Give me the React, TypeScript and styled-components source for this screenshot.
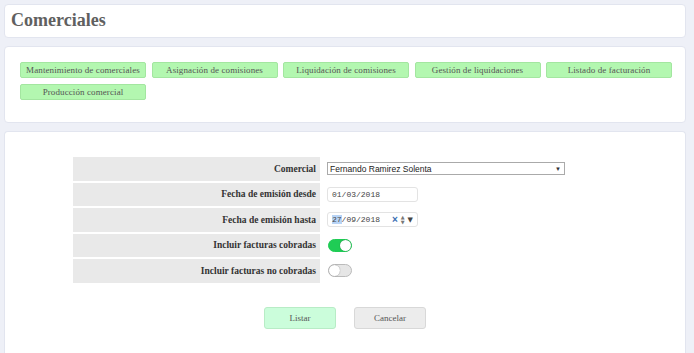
import { FC } from "react";
import styled, { createGlobalStyle } from "styled-components";

const GlobalStyle = createGlobalStyle`
  html, body {
    margin: 0;
    padding: 0;
    background: #eef0f7;
    font-family: "Liberation Serif", "Times New Roman", serif;
    overflow: hidden;
  }
`;

const menuItems = [
  "Mantenimiento de comerciales",
  "Asignación de comisiones",
  "Liquidación de comisiones",
  "Gestión de liquidaciones",
  "Listado de facturación",
  "Producción comercial",
];

const Styles = {
  Page: styled.div`
    display: flex;
    flex-direction: column;
    gap: 8px;
    padding: 4px 8px 0 4px;
    height: 353px;
    box-sizing: border-box;
  `,
  Panel: styled.div<{ $pad: string; $open?: boolean }>`
    background: #ffffff;
    border: 1px solid #e2e5ef;
    border-radius: ${({ $open }) => ($open ? "4px 4px 0 0" : "4px")};
    border-bottom: ${({ $open }) => ($open ? "none" : "1px solid #e2e5ef")};
    padding: ${({ $pad }) => $pad};
    flex: ${({ $open }) => ($open ? "1" : "none")};
  `,
  Title: styled.h1`
    margin: 0;
    font-size: 18px;
    font-weight: bold;
    color: #606060;
    line-height: 20px;
  `,
  Menu: styled.div`
    display: grid;
    grid-template-columns: repeat(5, 126px);
    column-gap: 5.5px;
    row-gap: 6px;
  `,
  MenuButton: styled.button`
    height: 16px;
    padding: 0;
    background: #b3f7b0;
    border: 1px solid #a3e6a0;
    border-radius: 2px;
    font-family: "Liberation Serif", "Times New Roman", serif;
    font-size: 9px;
    letter-spacing: 0.1px;
    color: #555;
    cursor: pointer;
  `,
  Form: styled.div`
    display: grid;
    grid-template-columns: 247px 247px;
    row-gap: 2px;
    margin-left: 68px;
  `,
  Label: styled.div`
    background: #e9e9e9;
    height: 23.5px;
    display: flex;
    align-items: center;
    justify-content: flex-end;
    padding-right: 4px;
    font-size: 9.5px;
    font-weight: bold;
    color: #333;
  `,
  Value: styled.div`
    display: flex;
    align-items: center;
    padding-left: 7px;
  `,
  Select: styled.div`
    width: 238px;
    height: 13px;
    box-sizing: border-box;
    border: 1px solid #aaa;
    display: flex;
    align-items: center;
    justify-content: space-between;
    padding: 0 3px 0 2px;
    font-family: "Liberation Sans", Arial, sans-serif;
    font-size: 8.5px;
    color: #222;
  `,
  Arrow: styled.span`
    font-size: 6px;
    color: #333;
  `,
  DateBox: styled.div`
    width: 91px;
    height: 15px;
    box-sizing: border-box;
    border: 1px solid #e3e3e3;
    border-radius: 3px;
    display: flex;
    align-items: center;
    padding-left: 4px;
    gap: 3px;
    font-family: "Liberation Mono", "Courier New", monospace;
    font-size: 8px;
    color: #666;
  `,
  DateText: styled.span`
    flex: 1;
    color: #444;
  `,
  Highlight: styled.span`
    background: #b8d4f6;
  `,
  Clear: styled.span`
    color: #3a6fb3;
    font-family: "Liberation Sans", Arial, sans-serif;
    font-size: 10px;
    font-weight: bold;
  `,
  Spin: styled.span`
    display: flex;
    flex-direction: column;
    font-family: "DejaVu Sans", sans-serif;
    font-size: 5px;
    line-height: 5px;
    color: #777;
  `,
  Drop: styled.span`
    font-family: "DejaVu Sans", sans-serif;
    font-size: 7px;
    color: #444;
    padding-right: 4px;
  `,
  Toggle: styled.div<{ $on: boolean }>`
    width: 24px;
    height: 13px;
    box-sizing: border-box;
    border-radius: 7px;
    margin-left: 1px;
    background: ${({ $on }) => ($on ? "#1fcc55" : "#e6e6e6")};
    border: 1px solid ${({ $on }) => ($on ? "#1fcc55" : "#bbb")};
    display: flex;
    justify-content: ${({ $on }) => ($on ? "flex-end" : "flex-start")};
    align-items: center;
  `,
  Knob: styled.div`
    width: 11px;
    height: 11px;
    border-radius: 50%;
    background: #fff;
    box-shadow: 0 0 1px rgba(0, 0, 0, 0.5);
  `,
  Actions: styled.div`
    display: flex;
    justify-content: center;
    gap: 18px;
    margin-top: 24px;
  `,
  ActionButton: styled.button<{ $primary?: boolean }>`
    width: 72px;
    height: 22px;
    border-radius: 3px;
    background: ${({ $primary }) => ($primary ? "#cbfddb" : "#ececec")};
    border: 1px solid ${({ $primary }) => ($primary ? "#b8ecc6" : "#d8d8d8")};
    font-family: "Liberation Serif", "Times New Roman", serif;
    font-size: 9px;
    color: #555;
    cursor: pointer;
  `,
};

const App: FC = () => {
  return (
    <>
      <GlobalStyle />
      <Styles.Page>
        <Styles.Panel $pad="5px 6px 7px 6px">
          <Styles.Title>Comerciales</Styles.Title>
        </Styles.Panel>
        <Styles.Panel $pad="15px 15px 22px 15px">
          <Styles.Menu>
            {menuItems.map((item) => (
              <Styles.MenuButton key={item}>{item}</Styles.MenuButton>
            ))}
          </Styles.Menu>
        </Styles.Panel>
        <Styles.Panel $pad="25px 0 0 0" $open>
          <Styles.Form>
            <Styles.Label>Comercial</Styles.Label>
            <Styles.Value>
              <Styles.Select>
                <span>Fernando Ramirez Solenta</span>
                <Styles.Arrow>▼</Styles.Arrow>
              </Styles.Select>
            </Styles.Value>
            <Styles.Label>Fecha de emisión desde</Styles.Label>
            <Styles.Value>
              <Styles.DateBox>
                <Styles.DateText>01/03/2018</Styles.DateText>
              </Styles.DateBox>
            </Styles.Value>
            <Styles.Label>Fecha de emisión hasta</Styles.Label>
            <Styles.Value>
              <Styles.DateBox>
                <Styles.DateText>
                  <Styles.Highlight>27</Styles.Highlight>/09/2018
                </Styles.DateText>
                <Styles.Clear>×</Styles.Clear>
                <Styles.Spin>
                  <span>▲</span>
                  <span>▼</span>
                </Styles.Spin>
                <Styles.Drop>▼</Styles.Drop>
              </Styles.DateBox>
            </Styles.Value>
            <Styles.Label>Incluir facturas cobradas</Styles.Label>
            <Styles.Value>
              <Styles.Toggle $on>
                <Styles.Knob />
              </Styles.Toggle>
            </Styles.Value>
            <Styles.Label>Incluir facturas no cobradas</Styles.Label>
            <Styles.Value>
              <Styles.Toggle $on={false}>
                <Styles.Knob />
              </Styles.Toggle>
            </Styles.Value>
          </Styles.Form>
          <Styles.Actions>
            <Styles.ActionButton $primary>Listar</Styles.ActionButton>
            <Styles.ActionButton>Cancelar</Styles.ActionButton>
          </Styles.Actions>
        </Styles.Panel>
      </Styles.Page>
    </>
  );
};

export default App;
